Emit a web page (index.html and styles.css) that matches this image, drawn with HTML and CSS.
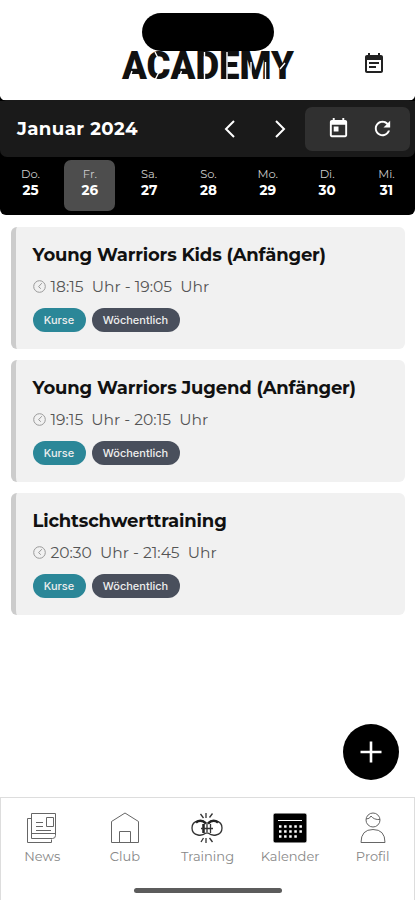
FILE: index.html
```html
<!DOCTYPE html>
<html lang="de">
<head>
    <meta charset="UTF-8">
    <meta name="viewport" content="width=device-width, initial-scale=1.0">
    <title>Kalender</title>
    <link rel="stylesheet" href="styles.css">
</head>
<body>
    <div class="app">
        <header class="header">
            <div class="island"></div>
            <svg class="logo" width="176" height="50" viewBox="0 -18 176 50">
                <text class="logo-text" x="2" y="29" textLength="172" lengthAdjust="spacingAndGlyphs">ACADEMY</text>
                <!-- Schablonenschnitte -->
                <path class="logo-cut" d="M9 30l3-9M35 2l4 8M35 30l4-8M58.500 30l3-9M84.500 2v28M107 2v28M131 12v18M145.500 12v18M160 19l5-6"/>
            </svg>
            <svg class="header-icon" width="24" height="24" viewBox="0 0 24 24">
                <path d="M17 10H7v2h10v-2zm2-7h-1V1h-2v2H8V1H6v2H5c-1.110 0-1.990.9-1.990 2L3 19c0 1.100.89 2 2 2h14c1.100 0 2-.9 2-2V5c0-1.100-.9-2-2-2zm0 16H5V8h14v11zm-5-5H7v2h7v-2z"/>
            </svg>
        </header>

        <section class="calendar">
            <svg class="corners" width="415" height="5" viewBox="0 0 415 5"><path d="M0 0q1 4 6 5H0zM415 0q-1 4-6 5h6z"/></svg>
            <div class="toolbar">
                <h1 class="month">Januar 2024</h1>
                <svg class="arrow" width="50" height="24" viewBox="0 0 50 24"><path d="M29 4l-8 8 8 8"/></svg>
                <svg class="arrow" width="50" height="24" viewBox="0 0 50 24"><path d="M21 4l8 8-8 8"/></svg>
                <div class="actions">
                    <svg width="23" height="23" viewBox="0 0 24 24"><path d="M19 3h-1V1h-2v2H8V1H6v2H5c-1.110 0-1.990.9-1.990 2L3 19c0 1.100.89 2 2 2h14c1.100 0 2-.9 2-2V5c0-1.100-.9-2-2-2zm0 16H5V8h14v11zM7 10h5v5H7z"/></svg>
                    <svg width="23" height="23" viewBox="0 0 24 24"><path d="M17.650 6.350C16.200 4.900 14.210 4 12 4c-4.420 0-7.990 3.580-7.990 8s3.570 8 7.990 8c3.730 0 6.840-2.550 7.730-6h-2.080c-.82 2.330-3.040 4-5.650 4-3.310 0-6-2.690-6-6s2.690-6 6-6c1.660 0 3.140.69 4.220 1.780L13 11h7V4l-2.350 2.350z"/></svg>
                </div>
            </div>
            <div class="days">
                <div class="day">Do.<b>25</b></div>
                <div class="day active">Fr.<b>26</b></div>
                <div class="day">Sa.<b>27</b></div>
                <div class="day">So.<b>28</b></div>
                <div class="day">Mo.<b>29</b></div>
                <div class="day">Di.<b>30</b></div>
                <div class="day">Mi.<b>31</b></div>
            </div>
        </section>

        <main class="list">
            <article class="card">
                <h2 class="title">Young Warriors Kids (Anfänger)</h2>
                <p class="time">
                    <svg width="13" height="13" viewBox="0 0 13 13"><circle cx="6.500" cy="6.500" r="5.800"/><path d="M8.800 3.200L5.600 6.700l2.200 2"/></svg>
                    <span>18:15&nbsp; Uhr - 19:05&nbsp; Uhr</span>
                </p>
                <div class="tags"><span class="tag kurse">Kurse</span><span class="tag">Wöchentlich</span></div>
            </article>
            <article class="card">
                <h2 class="title">Young Warriors Jugend (Anfänger)</h2>
                <p class="time">
                    <svg width="13" height="13" viewBox="0 0 13 13"><circle cx="6.500" cy="6.500" r="5.800"/><path d="M8.800 3.200L5.600 6.700l2.200 2"/></svg>
                    <span>19:15&nbsp; Uhr - 20:15&nbsp; Uhr</span>
                </p>
                <div class="tags"><span class="tag kurse">Kurse</span><span class="tag">Wöchentlich</span></div>
            </article>
            <article class="card">
                <h2 class="title">Lichtschwerttraining</h2>
                <p class="time">
                    <svg width="13" height="13" viewBox="0 0 13 13"><circle cx="6.500" cy="6.500" r="5.800"/><path d="M8.800 3.200L5.600 6.700l2.200 2"/></svg>
                    <span>20:30&nbsp; Uhr - 21:45&nbsp; Uhr</span>
                </p>
                <div class="tags"><span class="tag kurse">Kurse</span><span class="tag">Wöchentlich</span></div>
            </article>
        </main>

        <button class="add" aria-label="Neu">
            <svg width="24" height="24" viewBox="0 0 24 24"><path d="M12 1.500v21M1.500 12h21"/></svg>
        </button>

        <nav class="nav">
            <a class="nav-item">
                <svg width="36" height="32" viewBox="0 0 36 32"><path d="M7.500 1.500h24v22q0 3-3 3h-21zM7.500 6.500h-4v24h24v-3M7.500 21.500h24M22.500 5.500h7v9h-7zM12 10.500h7M12 14.500h7M12 18.500h15"/></svg>
                News
            </a>
            <a class="nav-item">
                <svg width="36" height="32" viewBox="0 0 36 32"><path d="M4.500 30.500v-21l13.500-8.500 13.500 8.500v21zM12.500 30.500v-11h11v11"/></svg>
                Club
            </a>
            <a class="nav-item">
                <svg class="training" width="36" height="32" viewBox="0 0 36 32">
                    <path d="M17 11q-4-3-8-2-6 1-6 7t6 7q4 1 8-2M19 11q4-3 8-2 6 1 6 7t-6 7q-4 1-8-2"/>
                    <path class="thick" d="M7 10.500q5-4 10 1M29 10.500q-5-4-10 1M14.500 12v9"/>
                    <path d="M18 11v11M21.500 12v9M12 16.500h12"/>
                    <path d="M17 1v5M11.500 2l3 4M23.500 1.500l-3 4M17 26v5M12 30l2.500-4M23.500 30l-3-4"/>
                </svg>
                Training
            </a>
            <a class="nav-item">
                <svg class="kalender" width="36" height="32" viewBox="0 0 36 32"><rect x="1" y="1" width="34" height="30" rx="2"/><path d="M6 8.500h24"/><path class="dots" d="M7 14.500h23M7 19.500h23M7 24.500h19"/></svg>
                Kalender
            </a>
            <a class="nav-item">
                <svg width="36" height="32" viewBox="0 0 36 32"><circle cx="18" cy="8" r="7"/><path d="M11 7q4 0 5-3 3 4 9 3.500M6 30.500q0-13 12-13t12 13z"/></svg>
                Profil
            </a>
            <div class="home-bar"></div>
        </nav>
    </div>
</body>
</html>
```

FILE: styles.css
```css
* {
    box-sizing: border-box;
}
body {
    margin: 0;
    background-color: #fff;
    font-family: Montserrat, Inter, sans-serif;
}
h1, h2, p {
    margin: 0;
}
.app {
    position: relative;
    display: flex;
    flex-direction: column;
    height: 900px;
    overflow: hidden;
}
/* Kopfbereich */
.header {
    position: relative;
    display: flex;
    justify-content: center;
    height: 100px;
    padding-top: 32px;
}
.island {
    position: absolute;
    left: 142px;
    top: 13px;
    width: 132px;
    height: 38px;
    border-radius: 19px;
    background-color: #000;
}
.logo {
    position: relative;
    overflow: visible;
}
.logo-text {
    font-family: Roboto, sans-serif;
    font-size: 38px;
    font-weight: 900;
    fill: #111;
}
.logo-cut {
    stroke: #fff;
    stroke-width: 1.4;
    fill: none;
}
.header-icon {
    position: absolute;
    left: 362px;
    top: 52px;
    fill: #222;
}
/* Kalenderleiste */
.calendar {
    position: relative;
    height: 115px;
    background-color: #000;
    border-radius: 0 0 6px 6px;
    color: #fff;
}
.corners {
    position: absolute;
    left: 0;
    top: -4px;
}
.toolbar {
    display: flex;
    align-items: center;
    height: 57px;
    padding: 0 5px 0 17px;
    background-color: #1a1a1a;
    border-radius: 0 0 7px 7px;
}
.month {
    flex: 1;
    font-size: 18.2px;
    letter-spacing: 0.4px;
}
.arrow {
    fill: none;
    stroke: #fff;
    stroke-width: 2;
}
.actions {
    display: flex;
    justify-content: center;
    align-items: center;
    gap: 21px;
    width: 105px;
    height: 44px;
    padding-left: 5px;
    background-color: #303030;
    border-radius: 7px;
    fill: #fff;
}
.days {
    display: flex;
    justify-content: space-between;
    padding: 3px 3px 3px 5px;
}
.day {
    width: 51px;
    height: 51px;
    padding-top: 7px;
    border-radius: 7px;
    font-size: 11.5px;
    line-height: 14px;
    text-align: center;
    color: #ccc;
}
.day b {
    display: block;
    font-size: 13.5px;
    line-height: 18px;
    color: #fff;
}
.day.active {
    background-color: #4d4d4d;
}
/* Kurse */
.list {
    display: flex;
    flex-direction: column;
    gap: 11px;
    padding: 12px 10px 0 11px;
}
.card {
    height: 122px;
    padding: 17px 0 0 16.5px;
    border-left: 5px solid #ccc;
    border-radius: 6px;
    background-color: #f1f1f1;
}
.title {
    font-size: 18px;
    line-height: 22px;
    letter-spacing: -0.17px;
    white-space: nowrap;
    color: #111;
}
.time {
    display: flex;
    align-items: center;
    gap: 5px;
    height: 20px;
    margin-top: 10px;
    font-size: 15.5px;
    color: #555;
}
.time svg {
    fill: none;
    stroke: #999;
}
.tags {
    display: flex;
    gap: 6px;
    margin-top: 12px;
}
.tag {
    width: 88px;
    height: 24px;
    border-radius: 12px;
    background-color: #494f5c;
    font-family: Inter, sans-serif;
    font-size: 11px;
    font-weight: 500;
    line-height: 24px;
    text-align: center;
    color: #eee;
}
.tag.kurse {
    width: 53px;
    background-color: #2b8798;
}
.add {
    position: absolute;
    left: 343px;
    top: 724px;
    display: flex;
    justify-content: center;
    align-items: center;
    width: 56px;
    height: 56px;
    border: 0;
    border-radius: 50%;
    background-color: #000;
}
.add svg {
    fill: none;
    stroke: #fff;
    stroke-width: 2.6;
}
/* Navigation unten */
.nav {
    position: relative;
    display: flex;
    height: 103px;
    margin-top: auto;
    padding-top: 14px;
    border: 1px solid #ddd;
    border-bottom: 0;
}
.nav-item {
    display: flex;
    flex: 1;
    flex-direction: column;
    align-items: center;
    font-size: 13px;
    line-height: 25px;
    color: #888;
}
.nav-item svg {
    fill: none;
    stroke: #666;
}
.nav-item .training {
    stroke: #333;
    stroke-width: 1.3;
}
.training .thick {
    stroke: #222;
    stroke-width: 2.5;
}
.nav-item .kalender {
    fill: #000;
    stroke: #fff;
}
.kalender .dots {
    stroke-width: 2.5;
    stroke-dasharray: 2.5 2.6;
}
.home-bar {
    position: absolute;
    left: 133px;
    bottom: 7px;
    width: 148px;
    height: 5px;
    border-radius: 3px;
    background-color: #5c5c5c;
}
```
